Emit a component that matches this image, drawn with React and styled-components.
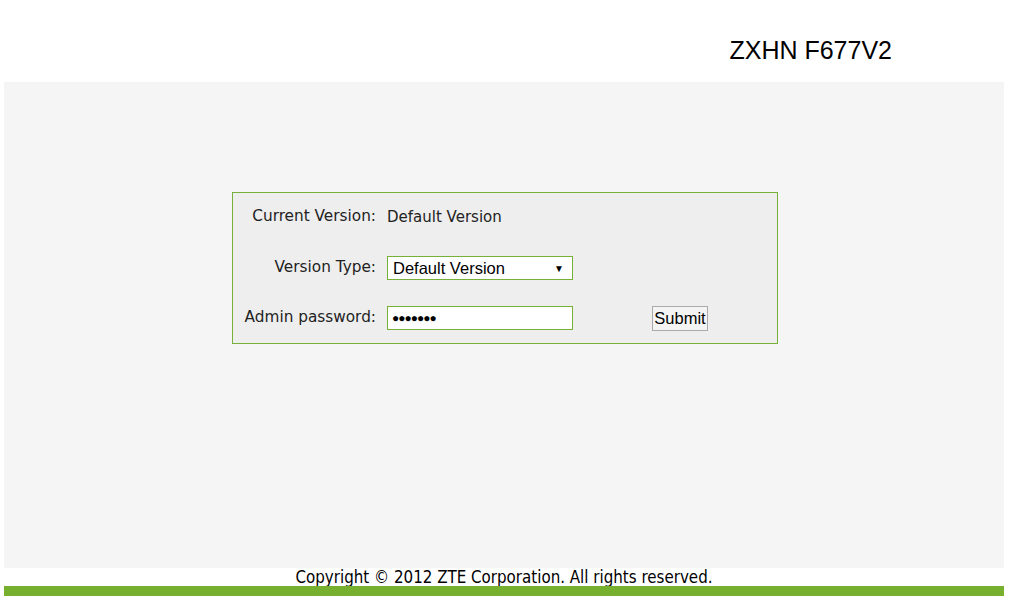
import React from 'react';
import styled, { createGlobalStyle } from 'styled-components';

const GlobalStyle = createGlobalStyle`
  html, body {
    margin: 0;
    padding: 0;
    background: #ffffff;
  }
`;

const Page = styled.div`
  width: 1000px;
  margin-left: 4px;
  display: flex;
  flex-direction: column;
`;

const Header = styled.div`
  height: 82px;
  display: flex;
  justify-content: flex-end;
  align-items: flex-start;
  padding-right: 112px;
  box-sizing: border-box;
`;

const ModelName = styled.h1`
  margin: 36px 0 0 0;
  font-family: "Liberation Sans", Arial, sans-serif;
  font-weight: normal;
  font-size: 25px;
  color: #000;
`;

const Content = styled.div`
  height: 486px;
  background: #f5f5f5;
  padding: 110px 0 0 228px;
  box-sizing: border-box;
`;

const FormBox = styled.div`
  width: 546px;
  height: 152px;
  box-sizing: border-box;
  border: 1px solid #76b036;
  background: #eeeeee;
  padding-top: 11px;
  display: flex;
  flex-direction: column;
`;

const Row = styled.div`
  height: 24px;
  margin-top: ${p => p.$gap || 0}px;
  display: flex;
  align-items: center;
`;

const Label = styled.div`
  width: 143px;
  text-align: right;
  font-family: "DejaVu Sans", Verdana, sans-serif;
  font-size: 15.3px;
  color: #222;
  margin-top: ${p => p.$up || -2}px;
`;

const Value = styled.div`
  margin-left: 11px;
  margin-top: 2px;
  font-family: "DejaVu Sans", Verdana, sans-serif;
  font-size: 15px;
  color: #222;
`;

const Select = styled.div`
  margin-left: 11px;
  width: 186px;
  height: 24px;
  box-sizing: border-box;
  border: 1px solid #76b036;
  background: #fff;
  display: flex;
  align-items: center;
  justify-content: space-between;
  padding: 0 8px 0 5px;
  font-family: "Liberation Sans", Arial, sans-serif;
  font-size: 16.5px;
  color: #000;
`;

const Arrow = styled.span`
  font-size: 10px;
  color: #000;
`;

const Password = styled.div`
  margin-left: 11px;
  width: 186px;
  height: 24px;
  box-sizing: border-box;
  border: 1px solid #76b036;
  background: #fff;
  display: flex;
  align-items: center;
  padding-left: 4px;
  font-family: "Liberation Sans", Arial, sans-serif;
  font-size: 12px;
  letter-spacing: -1px;
  color: #000;
`;

const SubmitButton = styled.button`
  margin-left: 79px;
  width: 56px;
  height: 25px;
  padding: 0;
  border: 1px solid #aaaaaa;
  background: #f4f4f4;
  font-family: "Liberation Sans", Arial, sans-serif;
  font-size: 16.5px;
  color: #000;
`;

const Footer = styled.div`
  height: 18px;
  text-align: center;
  font-family: "DejaVu Sans Condensed", "DejaVu Sans", sans-serif;
  font-stretch: condensed;
  font-size: 16.8px;
  line-height: 18px;
  color: #000;
`;

const GreenBar = styled.div`
  height: 10px;
  background: #76b02e;
`;

const App = () => {
  return (
    <Page>
      <GlobalStyle />
      <Header>
        <ModelName>ZXHN F677V2</ModelName>
      </Header>
      <Content>
        <FormBox>
          <Row>
            <Label $up={-1}>Current Version:</Label>
            <Value>Default Version</Value>
          </Row>
          <Row $gap={28}>
            <Label>Version Type:</Label>
            <Select>
              <span>Default Version</span>
              <Arrow>▼</Arrow>
            </Select>
          </Row>
          <Row $gap={26}>
            <Label>Admin password:</Label>
            <Password>●●●●●●●</Password>
            <SubmitButton>Submit</SubmitButton>
          </Row>
        </FormBox>
      </Content>
      <Footer>Copyright © 2012 ZTE Corporation. All rights reserved.</Footer>
      <GreenBar />
    </Page>
  );
};

export default App;
